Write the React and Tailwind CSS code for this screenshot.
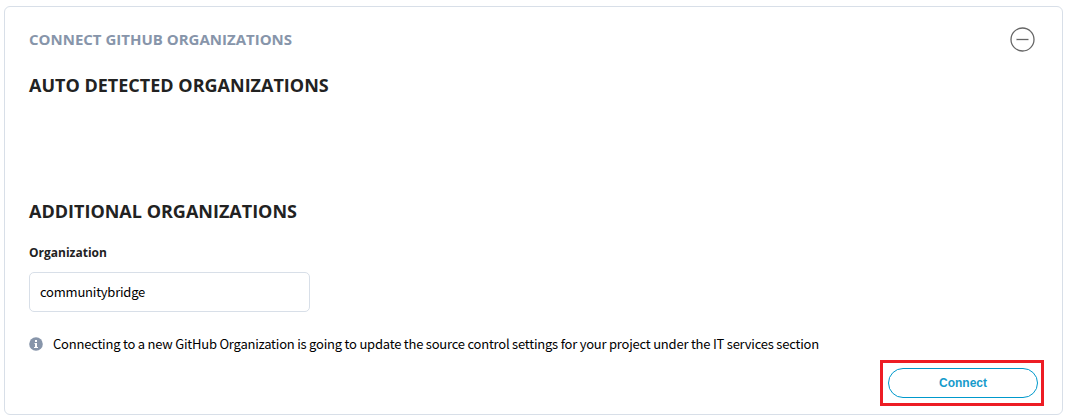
export default function App() {
  return (
    <div className="h-[419px] bg-white pt-[6px] pl-[4px] font-['Open_Sans',sans-serif]">
      <section className="flex h-[409px] w-[1059px] flex-col rounded-[6px] border border-[#d8dfe8] pl-[24px] text-[#222]">
        <header className="flex h-[65px] items-center justify-between pr-[27px]">
          <h2 className="-mt-[2px] text-[15px] leading-[20px] font-bold text-[#8795aa]">CONNECT GITHUB ORGANIZATIONS</h2>
          <svg className="-mt-px" width="25" height="25" viewBox="0 0 25 25" fill="none" stroke="#666" strokeWidth="1.3">
            <circle cx="12.5" cy="12.5" r="11.5" />
            <path d="M6.5 12.5h12" />
          </svg>
        </header>
        <h3 className="h-[126px] text-[18px] leading-[26px] font-bold">AUTO DETECTED ORGANIZATIONS</h3>
        <h3 className="text-[18px] leading-[26px] font-bold">ADDITIONAL ORGANIZATIONS</h3>
        <label className="mt-[20px] text-[12px] leading-[18px] font-bold">Organization</label>
        <input className="mt-[10px] h-[40px] w-[281px] rounded-[5px] border border-[#d8dfe8] px-[10px] pb-[2px] font-['Noto_Sans_CJK_SC',sans-serif] text-[13px] tracking-[-0.22px] text-black" defaultValue="communitybridge" />
        <p className="mt-[22px] flex h-[20px] items-center gap-[10px] font-['Noto_Sans_CJK_SC',sans-serif] text-[13px] tracking-[-0.22px] text-black">
          <svg width="14" height="14" viewBox="0 0 14 14">
            <circle cx="7" cy="7" r="6.8" fill="#8795aa" />
            <path d="M6 3h2v2H6zM5.5 6H8v4h1v1H5v-1h1V7h-.5z" fill="white" />
          </svg>
          <span>Connecting to a new GitHub Organization is going to update the source control settings for your project under the IT services section</span>
        </p>
        <div className="mt-[6px] mr-[18px] flex h-[46px] w-[164px] items-center self-end border-[3px] border-[#ed1c24] pl-[5px]">
          <button className="h-[30px] w-[150px] shrink-0 rounded-full border border-[#0099cc] font-['Liberation_Sans',sans-serif] text-[12px] font-bold text-[#169bcb]">Connect</button>
        </div>
      </section>
    </div>
  );
}
